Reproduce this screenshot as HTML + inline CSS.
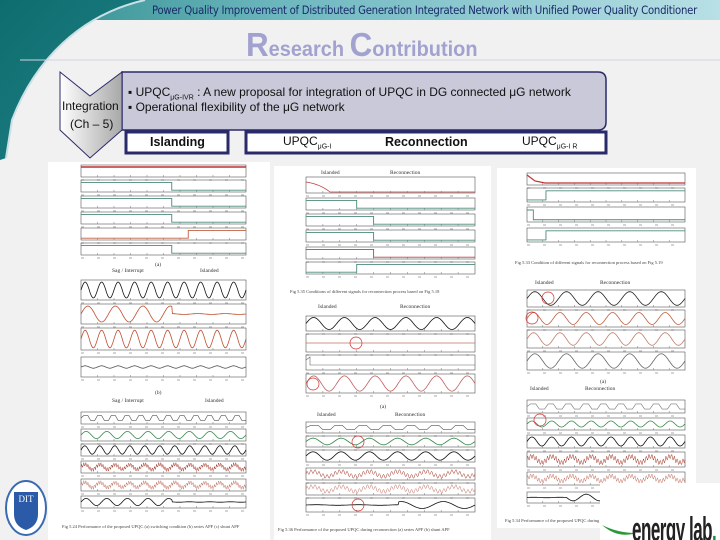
<!DOCTYPE html>
<html><head><meta charset="utf-8"><style>
*{margin:0;padding:0;box-sizing:border-box}
body{width:720px;height:540px;overflow:hidden;background:#f1f1f1;position:relative;font-family:"Liberation Sans",sans-serif}
.abs{position:absolute}
</style></head><body>
<div class="abs" style="left:0;top:0;width:720px;height:20px;background:linear-gradient(90deg,#2a8a8a,#6fb8c0 40%,#b8e0e6 100%)"></div>
<svg class="abs" style="left:0;top:0" width="720" height="200">
<defs><linearGradient id="sw" x1="0" y1="0" x2="1" y2="1"><stop offset="0" stop-color="#0e6e6e"/><stop offset="0.7" stop-color="#1a7a80"/><stop offset="1" stop-color="#3a5a9a"/></linearGradient></defs>
<path d="M0 0 L145 0 C80 15 35 60 12 120 L6 158 L0 160 Z" fill="url(#sw)"/>
<path d="M145 0 C80 15 35 60 12 120 L6 158" fill="none" stroke="#c9e0e6" stroke-width="2"/>
<line x1="20" y1="60" x2="720" y2="60" stroke="#d4d4e0" stroke-width="1"/>
<defs><linearGradient id="cg" x1="0" y1="0" x2="1" y2="0"><stop offset="0" stop-color="#fff"/><stop offset="1" stop-color="#a8a8a8"/></linearGradient></defs>
<path d="M122 72 H598 Q606 72 606 80 V122 Q606 130 598 130 H122 Z" fill="#c9c9d9" stroke="#2a2a6a" stroke-width="1.5"/>
<path d="M60 72 L90 96 L122 72 V130 L90 158 L60 130 Z" fill="url(#cg)" stroke="#2a2a6a" stroke-width="1"/>
<rect x="126" y="132" width="102" height="21" fill="#fff" stroke="#2a2a6a" stroke-width="3"/>
<rect x="246" y="132" width="360" height="21" fill="#fff" stroke="#2a2a6a" stroke-width="3"/>
</svg>
<div class="abs" style="left:152px;top:3px;font-size:11.5px;color:#1a2a6a;font-family:'DejaVu Sans',sans-serif;letter-spacing:-0.3px;white-space:nowrap;transform:scaleX(0.88);transform-origin:0 0">Power Quality Improvement of Distributed Generation Integrated Network with Unified Power Quality Conditioner</div>
<div class="abs" style="left:246px;top:26px;color:#a2a2d0;font-size:21px;font-weight:bold;white-space:nowrap;transform:scaleX(0.95);transform-origin:0 0"><span style="font-size:33px">R</span>esearch <span style="font-size:33px">C</span>ontribution</div>
<div class="abs" style="left:62px;top:99px;font-size:12px;color:#111">Integration</div>
<div class="abs" style="left:70px;top:117px;font-size:12px;color:#111">(Ch – 5)</div>
<div class="abs" style="left:128px;top:85px;font-size:12px;color:#111;white-space:nowrap">▪ UPQC<sub style="font-size:7px">μG-IVR</sub> : A new proposal for integration of UPQC in DG connected μG network</div>
<div class="abs" style="left:128px;top:100px;font-size:12px;color:#111">▪ Operational flexibility of the μG network</div>
<div class="abs" style="left:150px;top:135px;font-size:12.5px;font-weight:bold;color:#111">Islanding</div>
<div class="abs" style="left:283px;top:134px;font-size:12px;color:#111">UPQC<sub style="font-size:7px">μG-I</sub></div>
<div class="abs" style="left:385px;top:135px;font-size:12.5px;font-weight:bold;color:#111">Reconnection</div>
<div class="abs" style="left:522px;top:134px;font-size:12px;color:#111">UPQC<sub style="font-size:7px">μG-I R</sub></div>
<svg id="figs" class="abs" style="left:0;top:0" width="720" height="540"></svg>
<div class="abs" style="left:600px;top:483px;width:120px;height:57px;background:#fff;overflow:hidden">
<svg class="abs" style="left:0;top:36px" width="40" height="22"><path d="M2 6 Q18 20 36 14 Q18 14 2 6Z" fill="#2a9a3a"/></svg>
<div class="abs" style="left:32px;top:30px;font-size:34px;font-weight:bold;color:#222;letter-spacing:-1px;white-space:nowrap;line-height:1;transform:scaleX(0.5);transform-origin:0 0">energy lab<span style="color:#1a8a3a">.</span></div>
</div>
<svg class="abs" style="left:3px;top:478px" width="46" height="60"><ellipse cx="23" cy="30" rx="20" ry="27" fill="#fff" stroke="#3a6ab0" stroke-width="2"/><path d="M11 14 H35 V36 Q35 48 23 52 Q11 48 11 36Z" fill="#2a5aa8"/><text x="23" y="24" font-size="9" fill="#fff" text-anchor="middle" font-family="Liberation Serif">DIT</text></svg>
<script>
var h='';
function R(x,y,w,hh){h+='<rect x="'+x+'" y="'+y+'" width="'+w+'" height="'+hh+'" fill="#fff"/>';}
function box(x,y,w,hh){h+='<rect x="'+x+'" y="'+y+'" width="'+w+'" height="'+hh+'" fill="none" stroke="#555" stroke-width="0.6"/>';
 for(var i=1;i<10;i++)h+='<line x1="'+(x+w*i/10)+'" y1="'+(y+hh)+'" x2="'+(x+w*i/10)+'" y2="'+(y+hh-2)+'" stroke="#777" stroke-width="0.5"/>';
 h+='<line x1="'+x+'" y1="'+(y+hh+3)+'" x2="'+(x+w)+'" y2="'+(y+hh+3)+'" stroke="#bbb" stroke-width="1.2" stroke-dasharray="3 13"/>';}
function sine(x,y,w,hh,n,c,amp,start,end,noise){var p='';amp=amp||0.35;start=start||0;end=(end===undefined)?1:end;
 for(var i=0;i<=240;i++){var t=i/240;var a=(t>=start&&t<=end)?amp:0.02;var v=Math.sin(t*n*2*Math.PI);if(noise)v=0.6*v+0.5*Math.sin(t*n*14*Math.PI);p+=(i?'L':'M')+(x+t*w).toFixed(1)+' '+(y+hh/2-v*a*hh).toFixed(1);}
 h+='<path d="'+p+'" fill="none" stroke="'+c+'" stroke-width="'+(noise?0.5:0.8)+'"/>';}
function sq(x,y,w,hh,n,c){var p='M'+x+' '+(y+hh/2);for(var i=0;i<n;i++){var a=x+w*i/n,b=w/n;p+=' L'+(a+b*0.2)+' '+(y+hh*0.3)+' L'+(a+b*0.5)+' '+(y+hh*0.3)+' L'+(a+b*0.7)+' '+(y+hh*0.7)+' L'+(a+b)+' '+(y+hh*0.7);}h+='<path d="'+p+'" fill="none" stroke="'+c+'" stroke-width="0.6"/>';}
function step(x,y,w,hh,at,c,up){var y1=up?y+hh*0.85:y+hh*0.2,y2=up?y+hh*0.2:y+hh*0.85;
 h+='<path d="M'+x+' '+y1+' H'+(x+w*at)+' V'+y2+' H'+(x+w)+'" fill="none" stroke="'+(c||'#4a8a7a')+'" stroke-width="0.9"/>';}
function lbl(x,y,t){h+='<text x="'+x+'" y="'+y+'" font-size="5.5" font-family="Liberation Serif" fill="#333">'+t+'</text>';}
function cap(x,y,t){h+='<text x="'+x+'" y="'+y+'" font-size="4.5" font-family="Liberation Serif" fill="#444">'+t+'</text>';}
function circ(x,y){h+='<circle cx="'+x+'" cy="'+y+'" r="6" fill="none" stroke="#d03030" stroke-width="0.7"/>';}
R(48,162,222,378);
var X=81,W=165;
box(X,165,W,12);h+='<line x1="81" y1="167" x2="246" y2="167" stroke="#c03030" stroke-width="1.5"/>';
[[180,0.55,0],[196,0.55,0],[212,0.55,0],[228,0.65,1],[243,0.55,0]].forEach(function(r){box(X,r[0],W,12);step(X,r[0],W,12,r[1],r[2]?'#c06040':'#4a8a7a',r[2]);});
lbl(155,266,'(a)');lbl(112,272,'Sag / Interrupt');lbl(200,272,'Islanded');
box(X,280,W,20);sine(X,280,W,20,10,'#111',0.4);
box(X,304,W,20);sine(X,304,W,20,6,'#c05030',0.4,0,0.55);
box(X,328,W,22);sine(X,328,W,22,10,'#c05030',0.4);
box(X,357,W,20);sine(X,357,W,20,10,'#555',0.06);
lbl(155,394,'(b)');lbl(112,402,'Sag / Interrupt');lbl(205,402,'Islanded');
box(X,412,W,12);sq(X,412,W,12,12,'#555');
box(X,429,W,12);sine(X,429,W,12,8,'#3a8a4a',0.3);
box(X,444,W,12);sine(X,444,W,12,11,'#111',0.35);
box(X,461,W,12);sine(X,461,W,12,11,'#a03020',0.35,0,1,1);
box(X,479,W,12);sine(X,479,W,12,11,'#c07060',0.35,0,1,1);
box(X,496,W,12);sine(X,496,W,12,8,'#111',0.3,0,0.55);
cap(62,528,'Fig 5.24 Performance of the proposed UPQC (a) switching condition (b) series APF (c) shunt APF');
R(274,166,217,374);
var mx=306,mw=169;
lbl(321,174,'Islanded');lbl(390,174,'Reconnection');
box(mx,177,mw,16);h+='<path d="M306 182 Q320 184 330 192 L475 192" fill="none" stroke="#c04040" stroke-width="0.8"/>';
[[198,0.3,0,0],[214,0.4,0,0],[230,0.4,0,0],[247,0.4,1,0],[262,0.3,0,1]].forEach(function(r){box(mx,r[0],mw,12);step(mx,r[0],mw,12,r[1],r[2]?'#c04040':'#4a8a7a',r[3]);});
cap(290,293,'Fig 5.35 Conditions of different signals for reconnection process based on Fig 5.18');
lbl(318,308,'Islanded');lbl(400,308,'Reconnection');
box(mx,316,mw,15);sine(mx,316,mw,15,5.5,'#111',0.4);
box(mx,334,mw,18);h+='<line x1="306" y1="343" x2="475" y2="343" stroke="#c07060" stroke-width="0.8"/>';circ(356,343);
box(mx,355,mw,15);h+='<path d="M306 360 L310 357 L310 365 L475 365" fill="none" stroke="#666" stroke-width="0.6"/>';
box(mx,374,mw,19);sine(mx,374,mw,19,5.5,'#c06060',0.4);circ(313,384);
lbl(380,408,'(a)');lbl(317,416,'Islanded');lbl(395,416,'Reconnection');
box(mx,422,mw,11);sq(mx,422,mw,11,7,'#555');
box(mx,436,mw,11);sine(mx,436,mw,11,6,'#3a8a4a',0.3);circ(358,442);
box(mx,450,mw,12);sine(mx,450,mw,12,6,'#111',0.35);
box(mx,468,mw,12);sine(mx,468,mw,12,6,'#a03020',0.35,0,1,1);
box(mx,483,mw,12);sine(mx,483,mw,12,6,'#c07060',0.35,0,1,1);
box(mx,498,mw,14);sine(mx,498,mw,14,4,'#111',0.25,0.55,1);circ(358,505);
cap(278,531,'Fig 5.36 Performance of the proposed UPQC during reconnection (a) series APF (b) shunt APF');
R(497,168,199,360);
var rx=527,rw=158;
box(rx,173,rw,12);h+='<path d="M527 175 L535 181 L545 183 L685 183" fill="none" stroke="#c03030" stroke-width="1.2"/>';
box(rx,188,rw,14);step(rx,188,rw,14,0.12,'#4a8a7a',true);
box(rx,207,rw,15);step(rx,207,rw,15,0.04,'#4a8a7a',false);
box(rx,228,rw,14);step(rx,228,rw,14,0.12,'#4a8a7a',true);
cap(515,264,'Fig 5.33 Condition of different signals for reconnection process based on Fig 5.19');
lbl(535,284,'Islanded');lbl(600,284,'Reconnection');
box(rx,290,rw,17);sine(rx,290,rw,17,5,'#222',0.4);circ(548,298);
box(rx,310,rw,17);sine(rx,310,rw,17,6,'#c06040',0.35);circ(532,318);
box(rx,330,rw,18);sine(rx,330,rw,18,6,'#c08070',0.35);
box(rx,352,rw,18);sine(rx,352,rw,18,5,'#666',0.4);
lbl(600,383,'(a)');lbl(530,390,'Islanded');lbl(585,390,'Reconnection');
box(rx,400,rw,13);sq(rx,400,rw,13,9,'#777');
box(rx,418,rw,12);sine(rx,418,rw,12,8,'#3a8a4a',0.25);circ(540,420);
box(rx,435,rw,13);sine(rx,435,rw,13,8,'#111',0.35);
box(rx,452,rw,15);sine(rx,452,rw,15,8,'#a03020',0.35,0,1,1);
box(rx,472,rw,13);sine(rx,472,rw,13,8,'#c07060',0.35,0,1,1);
box(rx,492,rw,11);sine(rx,492,rw,11,6,'#111',0.3,0.25,1);
cap(505,522,'Fig 5.34 Performance of the proposed UPQC during reconnection (a) series APF (b) shunt APF');
document.getElementById('figs').innerHTML=h;
</script>
</body></html>
